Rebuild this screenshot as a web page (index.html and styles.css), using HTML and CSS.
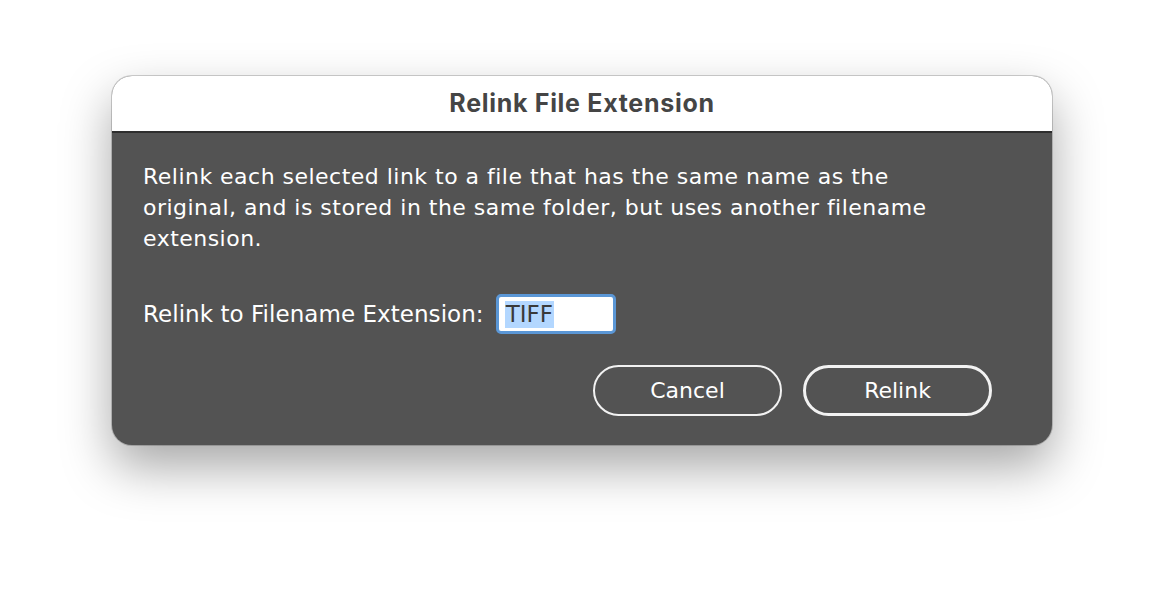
FILE: index.html
```html
<!DOCTYPE html>
<html>
<head>
<meta charset="utf-8">
<link rel="stylesheet" href="styles.css">
</head>
<body>
<div class="stage">
  <div class="dialog">
    <div class="titlebar">Relink File Extension</div>
    <div class="body">
      <p class="desc">Relink each selected link to a file that has the same name as the original, and is stored in the same folder, but uses another filename extension.</p>
      <div class="field">
        <span class="label">Relink to Filename Extension:</span>
        <div class="input"><span class="sel">TIFF</span></div>
      </div>
      <div class="buttons">
        <button class="btn">Cancel</button>
        <button class="btn default">Relink</button>
      </div>
    </div>
  </div>
</div>
</body>
</html>
```

FILE: styles.css
```css
html, body {
  margin: 0;
  padding: 0;
  background: #ffffff;
  width: 1164px;
  height: 594px;
  overflow: hidden;
}
.stage {
  padding: 76px 0 0 112px;
}
.dialog {
  width: 940px;
  height: 369px;
  border-radius: 20px;
  overflow: hidden;
  background: #535353;
  box-shadow: 0 0 0 1px rgba(0,0,0,0.18), 0 22px 50px rgba(0,0,0,0.35);
  font-family: "DejaVu Sans", sans-serif;
  display: flex;
  flex-direction: column;
}
.titlebar {
  background: #ffffff;
  border-bottom: 2px solid #2e2e2e;
  color: #454545;
  font-family: Inter, "DejaVu Sans", sans-serif;
  font-weight: bold;
  font-size: 25px;
  letter-spacing: 0.7px;
  display: flex;
  align-items: center;
  justify-content: center;
  padding-bottom: 2px;
  box-sizing: border-box;
  height: 57px;
}
.body {
  padding: 28px 31px 0 31px;
  color: #ffffff;
}
.desc {
  margin: 0;
  font-size: 22px;
  letter-spacing: 0.48px;
  line-height: 31px;
  width: 790px;
}
.field {
  margin-top: 40px;
  display: flex;
  align-items: center;
  gap: 12px;
}
.label {
  font-size: 23px;
  letter-spacing: 0.05px;
}
.input {
  height: 34px;
  background: #fff;
  border: 3px solid #5b97d6;
  border-radius: 5px;
  display: flex;
  align-items: center;
  padding-left: 6px;
  box-sizing: content-box;
  width: 108px;
}
.sel {
  background: #b3d7ff;
  color: #3a3a3a;
  font-size: 23px;
  line-height: 27px;
  padding: 0 1px;
}
.buttons {
  margin-top: 31px;
  display: flex;
  justify-content: flex-end;
  gap: 21px;
  padding-right: 29px;
}
.btn {
  width: 189px;
  height: 51px;
  border-radius: 26px;
  border: 2px solid #f2f2f2;
  background: transparent;
  color: #ffffff;
  font-family: "DejaVu Sans", sans-serif;
  font-size: 22px;
  padding: 0;
}
.btn.default {
  border-width: 3px;
}
```
